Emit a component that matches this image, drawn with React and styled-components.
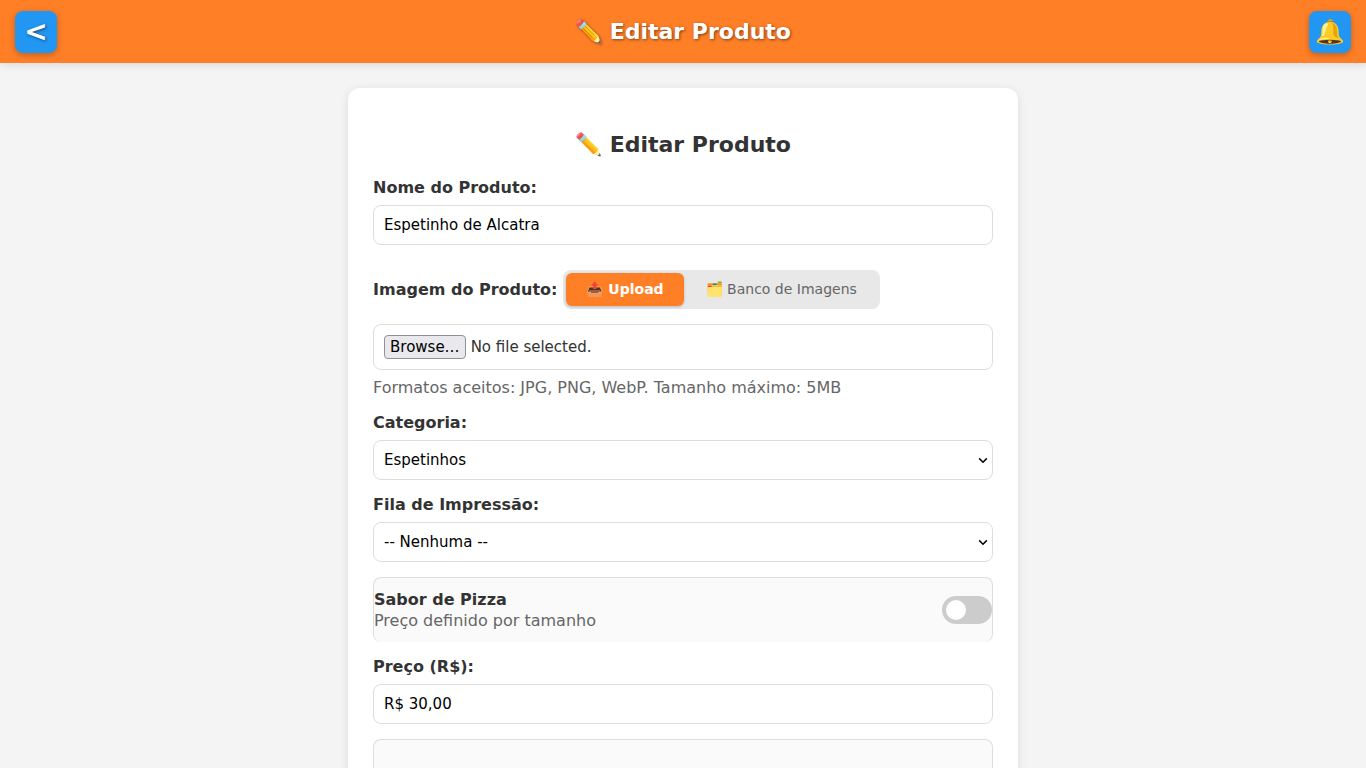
import React, { useState } from 'react';
import styled, { createGlobalStyle } from 'styled-components';

const GlobalStyle = createGlobalStyle`
* {
  box-sizing: border-box;
}
html {
  scrollbar-width: none;
}
body {
  margin: 0;
  background-color: #f4f4f4;
  color: #333;
  font-family: "DejaVu Sans", sans-serif;
  font-size: 16px;
  line-height: 19px;
}
button, input, select {
  font-family: inherit;
}
`

const Cabecalho = styled.header`
display: flex;
align-items: center;
justify-content: space-between;
height: 63px;
padding: 0 15px;
background-color: #ff7f27;
color: white;
box-shadow: 0 2px 8px rgba(0, 0, 0, 0.1);
`

const TituloCabecalho = styled.h1`
margin: 0;
font-size: 22px;
line-height: 33px;
text-shadow: 1px 1px 3px rgba(0, 0, 0, 0.5);
`

const BotaoCabecalho = styled.button`
display: flex;
align-items: center;
justify-content: center;
width: 42px;
height: 42px;
padding: 0;
border: none;
border-radius: 8px;
background-color: #2196f3;
color: white;
font-size: ${({ $tamanho }) => $tamanho};
font-weight: bold;
line-height: 28px;
text-shadow: ${({ $sombra }) => $sombra ? '1px 1px 3px rgba(0, 0, 0, 0.5)' : 'none'};
box-shadow: 0 2px 6px rgba(0, 0, 0, 0.25);
cursor: pointer;
`

const Cartao = styled.main`
max-width: 670px;
margin: 25px auto;
padding: 25px;
background-color: white;
border-radius: 12px;
box-shadow: 0 2px 10px rgba(0, 0, 0, 0.1);
`

const Titulo = styled.h2`
margin: 19px 0 20px;
font-size: 22px;
line-height: 26px;
text-align: center;
`

const Grupo = styled.div`
margin-bottom: 15px;
`

const Rotulo = styled.label`
display: block;
margin-bottom: 8px;
font-weight: bold;
`

const Campo = styled.input`
display: block;
width: 100%;
height: 40px;
padding: 0 10px;
border: 1px solid #ddd;
border-radius: 8px;
background-color: white;
color: black;
font-size: 15px;
`

const CaixaSelecao = styled.div`
position: relative;
`

const Selecao = styled(Campo).attrs({ as: 'select' })`
appearance: none;
`

const Seta = styled.svg`
position: absolute;
right: 5px;
top: 16px;
pointer-events: none;
`

const LinhaImagem = styled.div`
display: flex;
align-items: center;
gap: 6px;
margin: 25px 0 15px;
font-weight: bold;
`

const Abas = styled.div`
display: flex;
gap: 2px;
padding: 3px;
border-radius: 8px;
background-color: #e8e8e8;
`

const Aba = styled.button`
padding: 8px 20px;
border: none;
border-radius: 6px;
background-color: ${({ $ativa }) => $ativa ? '#ff7f27' : 'transparent'};
color: ${({ $ativa }) => $ativa ? 'white' : '#666'};
font-size: 14px;
font-weight: ${({ $ativa }) => $ativa ? 'bold' : 'normal'};
line-height: 17px;
box-shadow: ${({ $ativa }) => $ativa ? '0 1px 3px rgba(0, 0, 0, 0.2)' : 'none'};
cursor: pointer;
`

const Arquivo = styled.label`
position: relative;
display: flex;
align-items: center;
gap: 5px;
height: 46px;
padding: 0 10px;
border: 1px solid #ddd;
border-radius: 8px;
font-size: 15px;
`

const EntradaArquivo = styled.input`
position: absolute;
inset: 0;
width: 100%;
opacity: 0;
`

const Procurar = styled.span`
padding: 2px 5px;
border: 1px solid #8f8f9d;
border-radius: 4px;
background-color: #e9e9ed;
color: black;
line-height: 18px;
`

const Ajuda = styled.p`
margin: 8px 0 0;
color: #666;
line-height: 20px;
`

const Painel = styled.div`
display: flex;
align-items: center;
justify-content: space-between;
min-height: 65px;
margin-bottom: 15px;
border: 1px solid #ddd;
border-bottom: none;
border-radius: 8px;
background-color: #fafafa;
`

const TextoPainel = styled.label`
display: grid;
gap: 2px;
color: #666;
`

const NomePainel = styled.strong`
color: #333;
`

const Chave = styled.input`
appearance: none;
width: 50px;
height: 28px;
margin: 0;
padding: 4px;
border-radius: 14px;
background-color: #ccc;
cursor: pointer;

&::before {
  content: "";
  display: block;
  width: 20px;
  height: 20px;
  border-radius: 50%;
  background-color: white;
}
&:checked {
  background-color: #ff7f27;
}
&:checked::before {
  margin-left: auto;
}
`

function CampoSelecao({ id, rotulo, opcoes }) {
  return (
    <Grupo>
      <Rotulo htmlFor={id}>{rotulo}</Rotulo>
      <CaixaSelecao>
        <Selecao id={id}>
          {opcoes.map((opcao) => <option key={opcao}>{opcao}</option>)}
        </Selecao>
        <Seta width="10" height="9" viewBox="0 0 10 9" aria-hidden="true">
          <path d="M1.2 2.4 L5 6.2 L8.8 2.4" fill="none" stroke="black" strokeWidth="1.5" />
        </Seta>
      </CaixaSelecao>
    </Grupo>
  )
}

function App() {

  const [nome, setNome] = useState('Espetinho de Alcatra')
  const [preco, setPreco] = useState('R$ 30,00')
  const [aba, setAba] = useState('upload')
  const [pizza, setPizza] = useState(false)
  const [arquivo, setArquivo] = useState('')

  const handleArquivo = (e) => {
    setArquivo(e.target.files.length > 0 ? e.target.files[0].name : '')
  }

  return (
    <>
      <GlobalStyle />
      <Cabecalho>
        <BotaoCabecalho type="button" $tamanho="28px" $sombra>&lt;</BotaoCabecalho>
        <TituloCabecalho>✏️ Editar Produto</TituloCabecalho>
        <BotaoCabecalho type="button" $tamanho="24px">🔔</BotaoCabecalho>
      </Cabecalho>

      <Cartao>
        <Titulo>✏️ Editar Produto</Titulo>

        <Grupo>
          <Rotulo htmlFor="nome">Nome do Produto:</Rotulo>
          <Campo id="nome" value={nome} onChange={(e) => setNome(e.target.value)} />
        </Grupo>

        <LinhaImagem>
          <label htmlFor="imagem">Imagem do Produto:</label>
          <Abas>
            <Aba type="button" $ativa={aba === 'upload'} onClick={() => setAba('upload')}>📤 Upload</Aba>
            <Aba type="button" $ativa={aba === 'banco'} onClick={() => setAba('banco')}>🗂️ Banco de Imagens</Aba>
          </Abas>
        </LinhaImagem>

        <Grupo>
          <Arquivo>
            <EntradaArquivo id="imagem" type="file" accept="image/*" onChange={handleArquivo} />
            <Procurar>Browse…</Procurar>
            <span>{arquivo || 'No file selected.'}</span>
          </Arquivo>
          <Ajuda>Formatos aceitos: JPG, PNG, WebP. Tamanho máximo: 5MB</Ajuda>
        </Grupo>

        <CampoSelecao id="categoria" rotulo="Categoria:" opcoes={['Espetinhos']} />
        <CampoSelecao id="fila" rotulo="Fila de Impressão:" opcoes={['-- Nenhuma --']} />

        <Painel>
          <TextoPainel htmlFor="pizza">
            <NomePainel>Sabor de Pizza</NomePainel>
            <span>Preço definido por tamanho</span>
          </TextoPainel>
          <Chave id="pizza" type="checkbox" checked={pizza} onChange={(e) => setPizza(e.target.checked)} />
        </Painel>

        <Grupo>
          <Rotulo htmlFor="preco">Preço (R$):</Rotulo>
          <Campo id="preco" value={preco} onChange={(e) => setPreco(e.target.value)} />
        </Grupo>

        <Painel />
      </Cartao>
    </>
  )
}

export default App;
